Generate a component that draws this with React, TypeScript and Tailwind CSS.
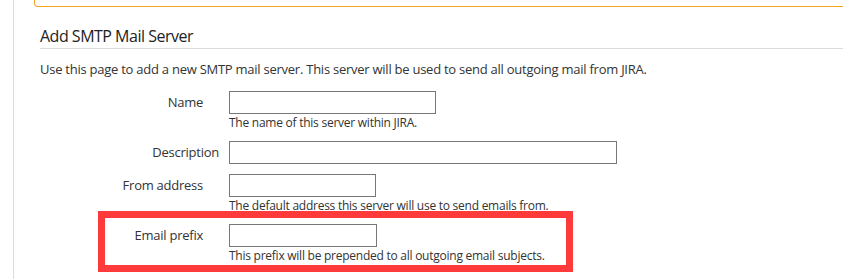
export default function App() {
  const rows: { label: string; req: boolean; w: string; help?: string }[] = [
    { label: "Name", req: true, w: "w-[207px]", help: "The name of this server within JIRA." },
    { label: "Description", req: false, w: "w-[388px]" },
    { label: "From address", req: true, w: "w-[147px]", help: "The default address this server will use to send emails from." },
    { label: "Email prefix", req: true, w: "w-[148px]", help: "This prefix will be prepended to all outgoing email subjects." },
  ];
  return (
    <div
      className="relative w-[843px] h-[279px] overflow-hidden bg-white text-[#333]"
      style={{ fontFamily: '"Open Sans", "Noto Sans", sans-serif' }}
    >
      <div className="ml-[13px] h-full border-l border-[#dcdcdc] pl-[20px]">
        <div className="h-[7px] -mr-[20px] border-l border-b border-[#f4a623] rounded-bl-[4px]" />
        <div className="pl-[6px] pr-0">
          <div className="mt-[18px] border-b border-[#dcdcdc] pb-[1px]">
            <h2 className="text-[16px] leading-[22px] tracking-[-0.5px] font-normal text-[#222]">Add SMTP Mail Server</h2>
          </div>
          <p className="mt-[11px] text-[13px] leading-[18px] tracking-[-0.25px]">
            Use this page to add a new SMTP mail server. This server will be used to send all outgoing mail from JIRA.
          </p>
          <div className="mt-[13px] flex flex-col gap-[10px]">
            {rows.map((r) => (
              <div key={r.label} className="flex">
                <div
                  className={
                    "w-[189px] shrink-0 text-right text-[13px] leading-[23px] tracking-[-0.25px] " +
                    (r.req ? "pr-[26px]" : "pr-[10px]")
                  }
                >
                  {r.label}
                </div>
                <div className="flex flex-col">
                  <div className={r.w + " h-[23px] border border-[#777] bg-white"} />
                  {r.help && (
                    <div className="text-[12px] leading-[16px] mt-[1px] tracking-[-0.25px] text-[#333]">{r.help}</div>
                  )}
                </div>
              </div>
            ))}
          </div>
        </div>
      </div>
      <div className="absolute left-[98px] top-[211px] w-[475px] h-[61px] border-[7px] border-[#fe3a3a]" />
    </div>
  );
}
